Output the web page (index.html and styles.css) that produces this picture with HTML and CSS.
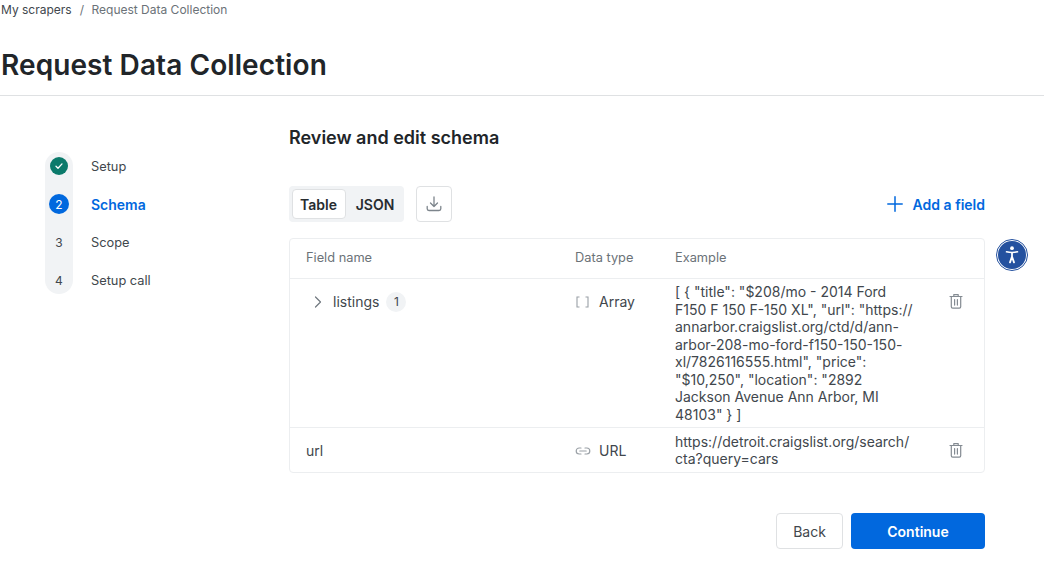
FILE: index.html
```html
<!DOCTYPE html>
<html lang="en">
<head>
<meta charset="utf-8">
<title>Request Data Collection</title>
<link rel="stylesheet" href="styles.css">
</head>
<body>
<header class="page-header">
  <nav class="crumbs"><span class="crumb-link">My scrapers</span><span class="crumb-sep">/</span><span class="crumb-current">Request Data Collection</span></nav>
  <h1 class="title">Request Data Collection</h1>
</header>
<main class="main">
  <aside class="sidebar">
    <ol class="steps">
      <li class="step"><span class="dot dot-done"><svg width="10" height="10" viewBox="0 0 10 10" fill="none"><path d="M2 5.300 4 7.200 8 2.900" stroke="#fff" stroke-width="1.300" stroke-linecap="round" stroke-linejoin="round"/></svg></span><span class="step-label">Setup</span></li>
      <li class="step"><span class="dot dot-active">2</span><span class="step-label step-label-active">Schema</span></li>
      <li class="step"><span class="dot">3</span><span class="step-label">Scope</span></li>
      <li class="step"><span class="dot">4</span><span class="step-label">Setup call</span></li>
    </ol>
  </aside>
  <section class="content">
    <h2 class="heading">Review and edit schema</h2>
    <div class="toolbar">
      <div class="segmented"><button class="seg seg-on">Table</button><button class="seg seg-off">JSON</button></div>
      <button class="icon-btn" aria-label="Download"><svg width="18" height="18" viewBox="0 0 18 18" fill="none" stroke="#7d858c" stroke-width="1.300" stroke-linecap="round" stroke-linejoin="round"><path d="M9 2v9.500M5.500 8 9 11.500 12.500 8"/><path d="M2.200 11.500v2.200c0 1 .8 1.800 1.800 1.800h10c1 0 1.800-.8 1.800-1.800v-2.200"/></svg></button>
      <button class="add"><svg width="16" height="16" viewBox="0 0 16 16" fill="none" stroke="#0168de" stroke-width="1.500" stroke-linecap="round"><path d="M8 .8v14.400M.8 8h14.400"/></svg><span>Add a field</span></button>
    </div>
    <div class="table">
      <div class="row row-head"><div class="c-name">Field name</div><div class="c-type">Data type</div><div class="c-ex">Example</div></div>
      <div class="row row-body">
        <div class="c-name name-nested"><svg class="chev" width="8" height="12" viewBox="0 0 8 12" fill="none" stroke="#70787f" stroke-width="1.200" stroke-linecap="round" stroke-linejoin="round"><path d="M1.500 1 6.500 6 1.500 11"/></svg><span>listings</span><span class="badge">1</span></div>
        <div class="c-type type-cell"><svg width="16" height="12" viewBox="0 0 16 12" fill="none" stroke="#9aa0a6" stroke-width="1.100"><path d="M4.500 1H2v10h2.500M10.500 1H13v10h-2.500"/></svg><span>Array</span></div>
        <div class="c-ex">[ { "title": "$208/mo - 2014 Ford F150 F 150 F-150 XL", "url": "https://<wbr>annarbor.craigslist.org/ctd/d/ann-arbor-208-mo-ford-f150-150-150-xl/7826116555.html", "price": "$10,250", "location": "2892 Jackson Avenue Ann Arbor, MI 48103" } ]</div>
        <div class="c-del"><svg width="14" height="16" viewBox="0 0 14 16" fill="none" stroke="#848b92" stroke-width="1.200" stroke-linecap="round" stroke-linejoin="round"><path d="M1 3.500h12M4.800 3.300V1.600h4.400v1.700M2.300 3.500v10.200c0 .8.600 1.400 1.400 1.400h6.600c.8 0 1.400-.6 1.400-1.400V3.500M5.600 6.500v5.600M8.400 6.500v5.600"/></svg></div>
      </div>
      <div class="row row-body row-url">
        <div class="c-name url-name">url</div>
        <div class="c-type type-cell"><svg width="16" height="12" viewBox="0 0 16 12" fill="none" stroke="#9aa0a6" stroke-width="1.200" stroke-linecap="round"><path d="M6 3H4.200a3 3 0 0 0 0 6H6M10 3h1.800a3 3 0 0 1 0 6H10M4.800 6h6.400"/></svg><span>URL</span></div>
        <div class="c-ex">https://detroit.craigslist.org/search/cta?query=cars</div>
        <div class="c-del"><svg width="14" height="16" viewBox="0 0 14 16" fill="none" stroke="#848b92" stroke-width="1.200" stroke-linecap="round" stroke-linejoin="round"><path d="M1 3.500h12M4.800 3.300V1.600h4.400v1.700M2.300 3.500v10.200c0 .8.600 1.400 1.400 1.400h6.600c.8 0 1.400-.6 1.400-1.400V3.500M5.600 6.500v5.600M8.400 6.500v5.600"/></svg></div>
      </div>
    </div>
    <div class="actions"><button class="btn btn-back">Back</button><button class="btn btn-primary">Continue</button></div>
  </section>
</main>
<button class="a11y" aria-label="Accessibility"><svg width="14" height="18" viewBox="0 0 14 18" fill="none" stroke="#fff" stroke-width="1.500" stroke-linecap="round" stroke-linejoin="round"><circle cx="7" cy="2.200" r="1.900" fill="#fff" stroke="none"/><path d="M1.500 5.800Q7 7.300 12.500 5.800"/><path d="M7 6.800V11M7 10.600 5 16.400M7 10.600 9 16.400" stroke-width="1.800"/></svg></button>
</body>
</html>
```
FILE: styles.css
```css
* { box-sizing: border-box; }
html, body { margin: 0; padding: 0; }
body { font-family: Inter, "Liberation Sans", sans-serif; color: #272c30; background: #fff; height: 566px; overflow: hidden; position: relative; }
button { font-family: inherit; cursor: pointer; }
.page-header { border-bottom: 1px solid #dfe1e3; height: 96px; padding-left: 1px; }
.crumbs { font-size: 12px; line-height: 19px; height: 18px; display: flex; color: #6b7278; }
.crumb-link { color: #41474d; }
.crumb-sep { margin: 0 7.500px 0 8px; }
.title { margin: 29px 0 0; font-size: 28px; line-height: 36px; font-weight: 600; color: #212529; letter-spacing: 0.080px; }
.main { display: flex; padding-left: 45px; }
.sidebar { width: 244px; padding-top: 56px; flex: none; }
.steps { list-style: none; margin: 0; padding: 0; display: flex; flex-direction: column; gap: 10px; position: relative; }
.steps::before { content: ""; position: absolute; left: 0; top: 0; bottom: 0; width: 28px; background: #f1f3f5; border-radius: 14px; }
.step { display: flex; align-items: center; height: 28px; position: relative; font-size: 12.800px; }
.dot { width: 28px; height: 28px; display: flex; align-items: center; justify-content: center; font-size: 12px; color: #41474d; position: relative; flex: none; }
.dot-done::before, .dot-active::before { content: ""; position: absolute; border-radius: 50%; }
.dot-done::before { width: 18px; height: 18px; background: #0b7a6b; left: 5px; top: 5px; }
.dot-active::before { width: 20px; height: 20px; background: #0168de; left: 4px; top: 4px; z-index: -1; }
.dot-done svg { position: relative; }
.dot-active { color: #fff; isolation: isolate; }
.step-label { margin-left: 18px; color: #41474d; }
.step-label-active { color: #0168de; font-weight: 600; font-size: 14px; }
.content { width: 696px; flex: none; }
.heading { margin: 30px 0 0; font-size: 18px; line-height: 24px; font-weight: 600; color: #212529; }
.toolbar { display: flex; align-items: center; margin-top: 36px; height: 36px; }
.segmented { display: flex; background: #f1f3f5; border-radius: 4px; padding: 3px 0 3px 3px; width: 115px; height: 36px; }
.seg { border: 0; background: transparent; font-size: 14px; font-weight: 600; color: #272c30; padding: 0; height: 30px; border-radius: 4px; }
.seg-on { background: #fff; border: 1px solid #dfe1e3; width: 54px; padding-right: 1px; }
.seg-off { width: 58px; }
.icon-btn { margin-left: 12px; width: 36px; height: 36px; border: 1px solid #dfe1e3; border-radius: 4px; background: #fff; display: flex; align-items: center; justify-content: center; padding: 0; }
.add { margin-left: auto; border: 0; background: transparent; color: #0168de; font-size: 14px; font-weight: 600; display: flex; align-items: center; gap: 10px; padding: 0; }
.table { margin-top: 16px; border: 1px solid #eceef0; border-radius: 4px; font-size: 14px; line-height: 17.500px; color: #41474d; height: 235px; }
.row { display: flex; border-bottom: 1px solid #eceef0; }
.row:last-child { border-bottom: 0; }
.row-head { height: 40px; align-items: center; font-size: 12.800px; color: #6b7278; padding-bottom: 1px; }
.row-body { padding-top: 4px; height: 149px; }
.row-url { height: 44px; align-items: center; padding-top: 0; }
.c-name { width: 285px; padding-left: 16px; flex: none; }
.url-name { padding-top: 2px; }
.c-type { width: 100px; flex: none; }
.c-ex { width: 238px; flex: none; overflow-wrap: anywhere; }
.name-nested { display: flex; align-items: center; height: 36px; color: #41474d; padding-left: 24px; margin-top: 1px; }
.chev { margin-right: 11px; }
.badge { margin-left: 7px; width: 20px; height: 20px; border-radius: 50%; background: #f1f3f5; font-size: 12px; display: flex; align-items: center; justify-content: center; color: #41474d; }
.type-cell { display: flex; align-items: center; gap: 8px; height: 38px; }
.row-url .type-cell { height: auto; padding-top: 2px; }
.c-del { margin-left: 35px; width: 16px; height: 36px; display: flex; align-items: center; justify-content: center; flex: none; }
.row-url .c-del { height: auto; }
.actions { display: flex; justify-content: flex-end; gap: 8px; margin-top: 40px; }
.btn { height: 36px; border-radius: 4px; font-size: 14px; }
.btn-back { width: 67px; background: #fff; border: 1px solid #dfe1e3; color: #41474d; }
.btn-primary { width: 134px; background: #0168de; border: 0; color: #fff; font-weight: 600; }
.a11y { position: absolute; left: 996px; top: 239px; width: 32px; height: 32px; border-radius: 50%; background: #24519f; border: 2px solid #fff; outline: 1px solid #24519f; outline-offset: -1px; padding: 0; display: flex; align-items: center; justify-content: center; }
```
